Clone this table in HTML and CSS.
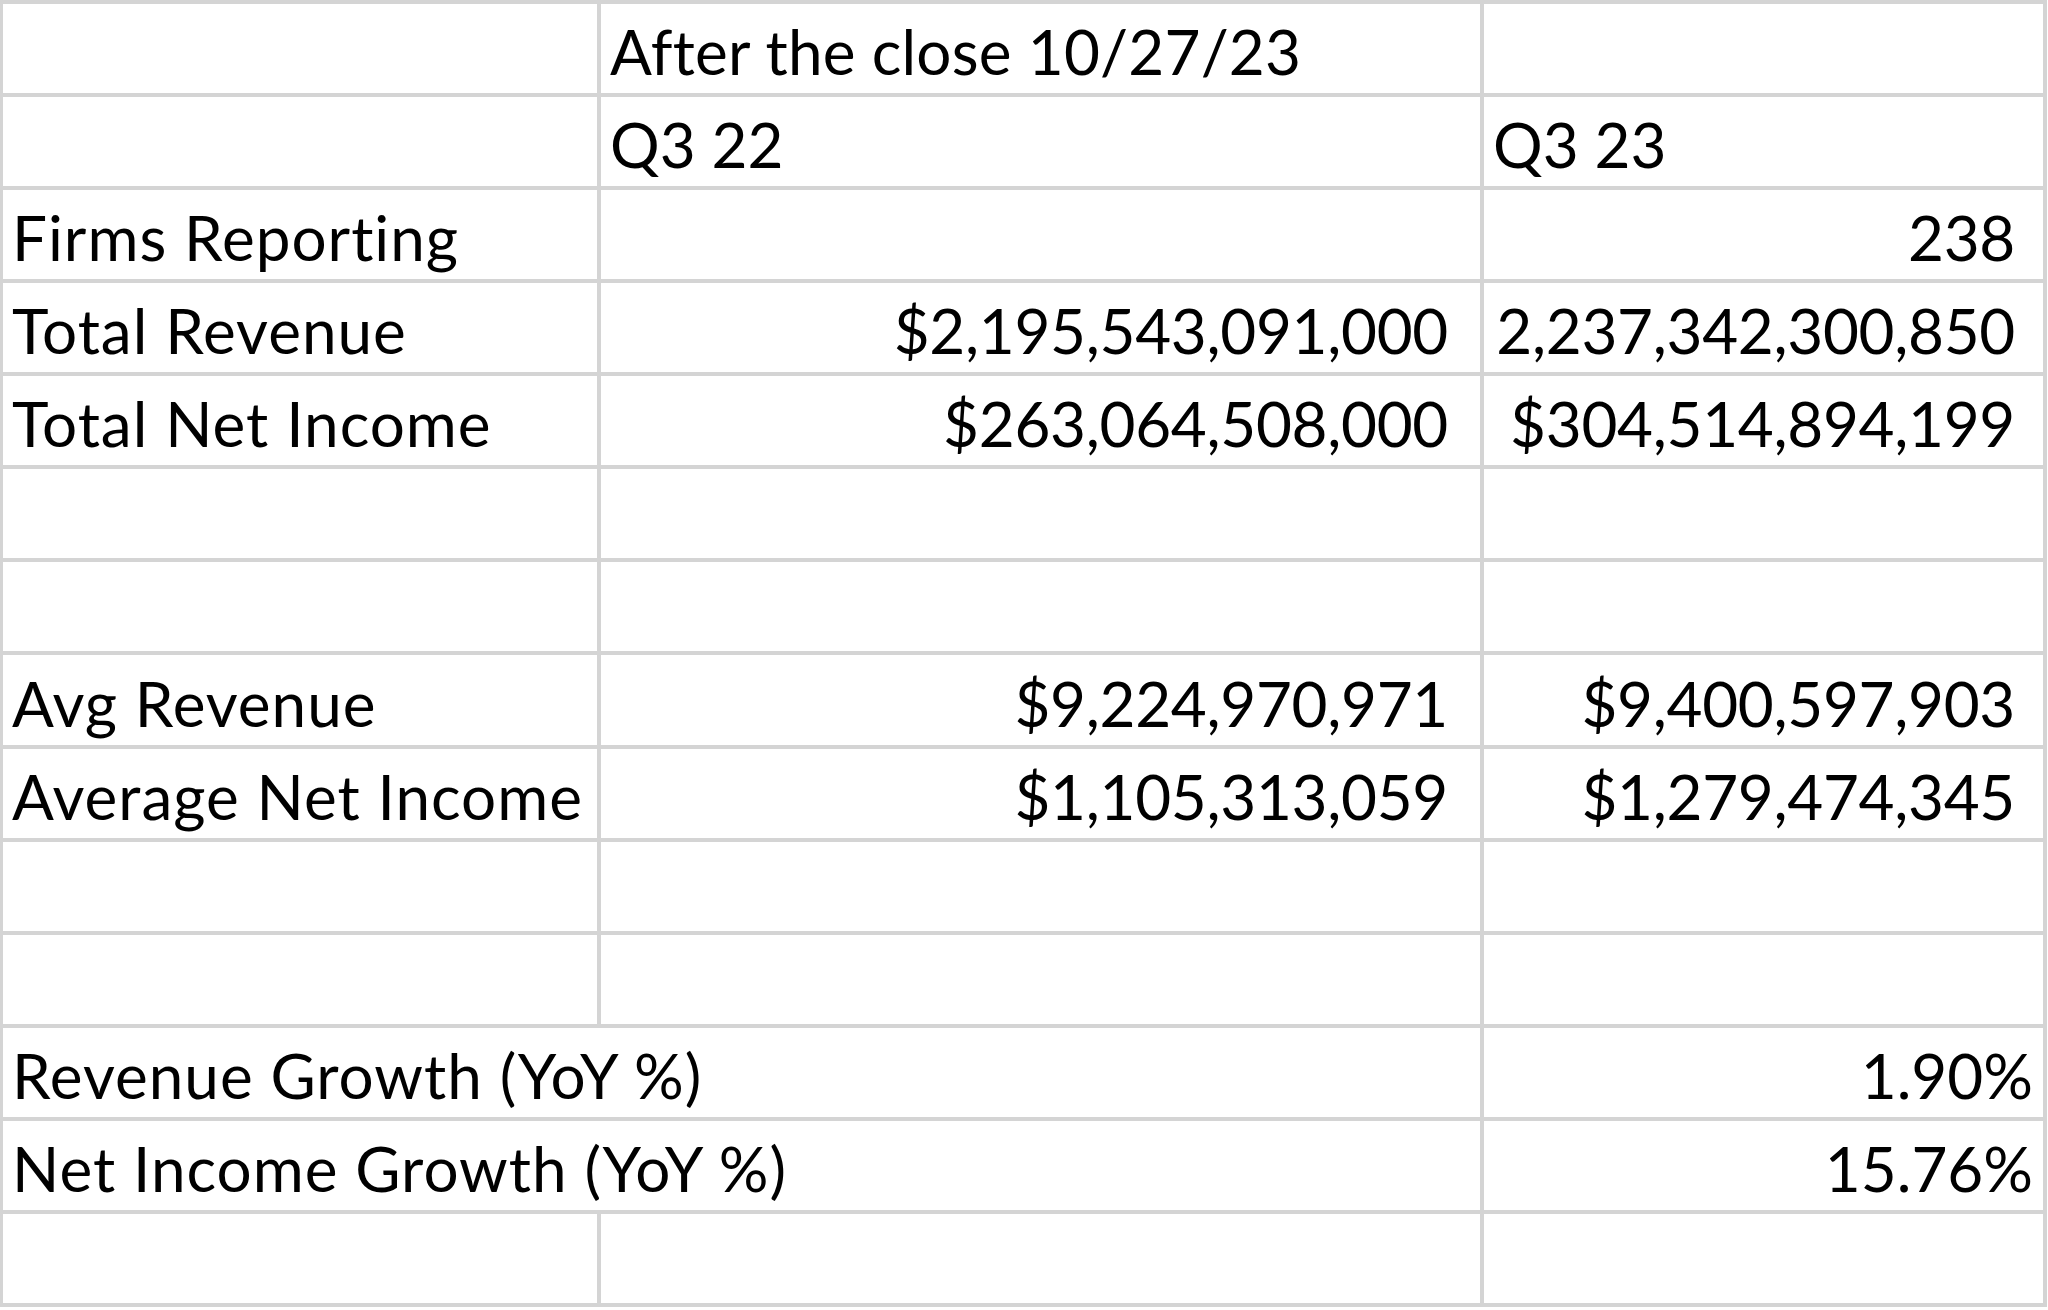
FILE: index.html
```html
<!DOCTYPE html>
<html lang="en">
<head>
<meta charset="utf-8">
<title>Q3 Earnings Summary</title>
<link rel="stylesheet" href="styles.css">
</head>
<body>
<div class="sheet">
  <div class="cell"></div><div class="cell head">After the close 10/27/23</div><div class="cell"></div>
  <div class="cell"></div><div class="cell">Q3 22</div><div class="cell">Q3 23</div>
  <div class="cell label">Firms Reporting</div><div class="cell"></div><div class="cell num last">238</div>
  <div class="cell label">Total Revenue</div><div class="cell num">$2,195,543,091,000</div><div class="cell num last">2,237,342,300,850</div>
  <div class="cell label">Total Net Income</div><div class="cell num">$263,064,508,000</div><div class="cell num last">$304,514,894,199</div>
  <div class="cell"></div><div class="cell"></div><div class="cell"></div>
  <div class="cell"></div><div class="cell"></div><div class="cell"></div>
  <div class="cell label">Avg Revenue</div><div class="cell num">$9,224,970,971</div><div class="cell num last">$9,400,597,903</div>
  <div class="cell label">Average Net Income</div><div class="cell num">$1,105,313,059</div><div class="cell num last">$1,279,474,345</div>
  <div class="cell"></div><div class="cell"></div><div class="cell"></div>
  <div class="cell"></div><div class="cell"></div><div class="cell"></div>
  <div class="cell label wide">Revenue Growth (YoY %)</div><div class="cell pct">1.90%</div>
  <div class="cell label wide">Net Income Growth (YoY %)</div><div class="cell pct">15.76%</div>
  <div class="cell"></div><div class="cell"></div><div class="cell"></div>
</div>
</body>
</html>
```
FILE: styles.css
```css
html, body {
  margin: 0;
  padding: 0;
  background: #ffffff;
}
.sheet {
  width: 2047px;
  height: 1307px;
  box-sizing: border-box;
  padding: 4px 4px 4px 3px;
  background: #d4d4d4;
  display: grid;
  grid-template-columns: 594px 879px 559px;
  grid-template-rows: repeat(14, 1fr);
  gap: 4px;
  font-family: Lato, "Open Sans", sans-serif;
  font-size: 62px;
  color: #000000;
}
.cell {
  background: #ffffff;
  display: flex;
  align-items: flex-end;
  line-height: 1;
  padding: 0 0 11px 9px;
  white-space: nowrap;
  overflow: visible;
  min-width: 0;
}
.label {
  letter-spacing: 1px;
}
.head {
  letter-spacing: 0.2px;
}
.num {
  justify-content: flex-end;
  padding-right: 32px;
  letter-spacing: -0.3px;
}
.num.last {
  padding-right: 28px;
}
.pct {
  justify-content: flex-end;
  padding-right: 10px;
}
.wide {
  grid-column: span 2;
}
```
